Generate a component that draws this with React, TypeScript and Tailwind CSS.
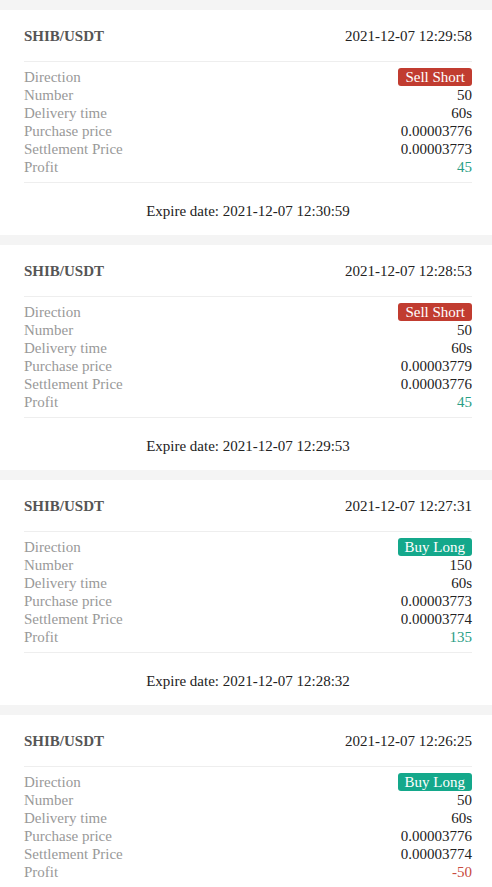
import React from "react";

type Order = {
  time: string;
  dir: "sell" | "buy";
  number: string;
  purchase: string;
  settle: string;
  profit: string;
  expire: string;
};

const orders: Order[] = [
  { time: "2021-12-07 12:29:58", dir: "sell", number: "50", purchase: "0.00003776", settle: "0.00003773", profit: "45", expire: "2021-12-07 12:30:59" },
  { time: "2021-12-07 12:28:53", dir: "sell", number: "50", purchase: "0.00003779", settle: "0.00003776", profit: "45", expire: "2021-12-07 12:29:53" },
  { time: "2021-12-07 12:27:31", dir: "buy", number: "150", purchase: "0.00003773", settle: "0.00003774", profit: "135", expire: "2021-12-07 12:28:32" },
  { time: "2021-12-07 12:26:25", dir: "buy", number: "50", purchase: "0.00003776", settle: "0.00003774", profit: "-50", expire: "2021-12-07 12:27:26" },
];

function Row({ label, children }: { label: string; children: React.ReactNode }) {
  return (
    <div className="flex justify-between items-center h-[18px]">
      <span className="text-[#999]">{label}</span>
      {children}
    </div>
  );
}

export default function App() {
  return (
    <div
      className="min-h-screen bg-[#f4f4f4] pt-[10px] flex flex-col gap-[10px] text-[15px] leading-[18px]"
      style={{ fontFamily: '"Liberation Serif", "Times New Roman", serif' }}
    >
      {orders.map((o, i) => (
        <div key={i} className="bg-white pl-[24px] pr-[20px]">
          <div className="flex justify-between pt-[17px] pb-[16px] border-b border-[#eeeeee]">
            <span className="font-bold text-[#555]">SHIB/USDT</span>
            <span className="text-[#222]">{o.time}</span>
          </div>
          <div className="pt-[6px] pb-[6px] border-b border-[#eeeeee] text-[#222]">
            <Row label="Direction">
              {o.dir === "sell" ? (
                <span className="bg-[#c13c30] text-white rounded-[3px] px-[7px] h-[18px] leading-[18px]">Sell Short</span>
              ) : (
                <span className="bg-[#14a88b] text-white rounded-[3px] px-[7px] h-[18px] leading-[18px]">Buy Long</span>
              )}
            </Row>
            <Row label="Number"><span>{o.number}</span></Row>
            <Row label="Delivery time"><span>60s</span></Row>
            <Row label="Purchase price"><span>{o.purchase}</span></Row>
            <Row label="Settlement Price"><span>{o.settle}</span></Row>
            <Row label="Profit">
              <span className={o.profit.startsWith("-") ? "text-[#c84b40]" : "text-[#2a9d84]"}>{o.profit}</span>
            </Row>
          </div>
          <div className="pt-[19px] pb-[15px] text-center text-[#222]">
            Expire date: {o.expire}
          </div>
        </div>
      ))}
    </div>
  );
}
